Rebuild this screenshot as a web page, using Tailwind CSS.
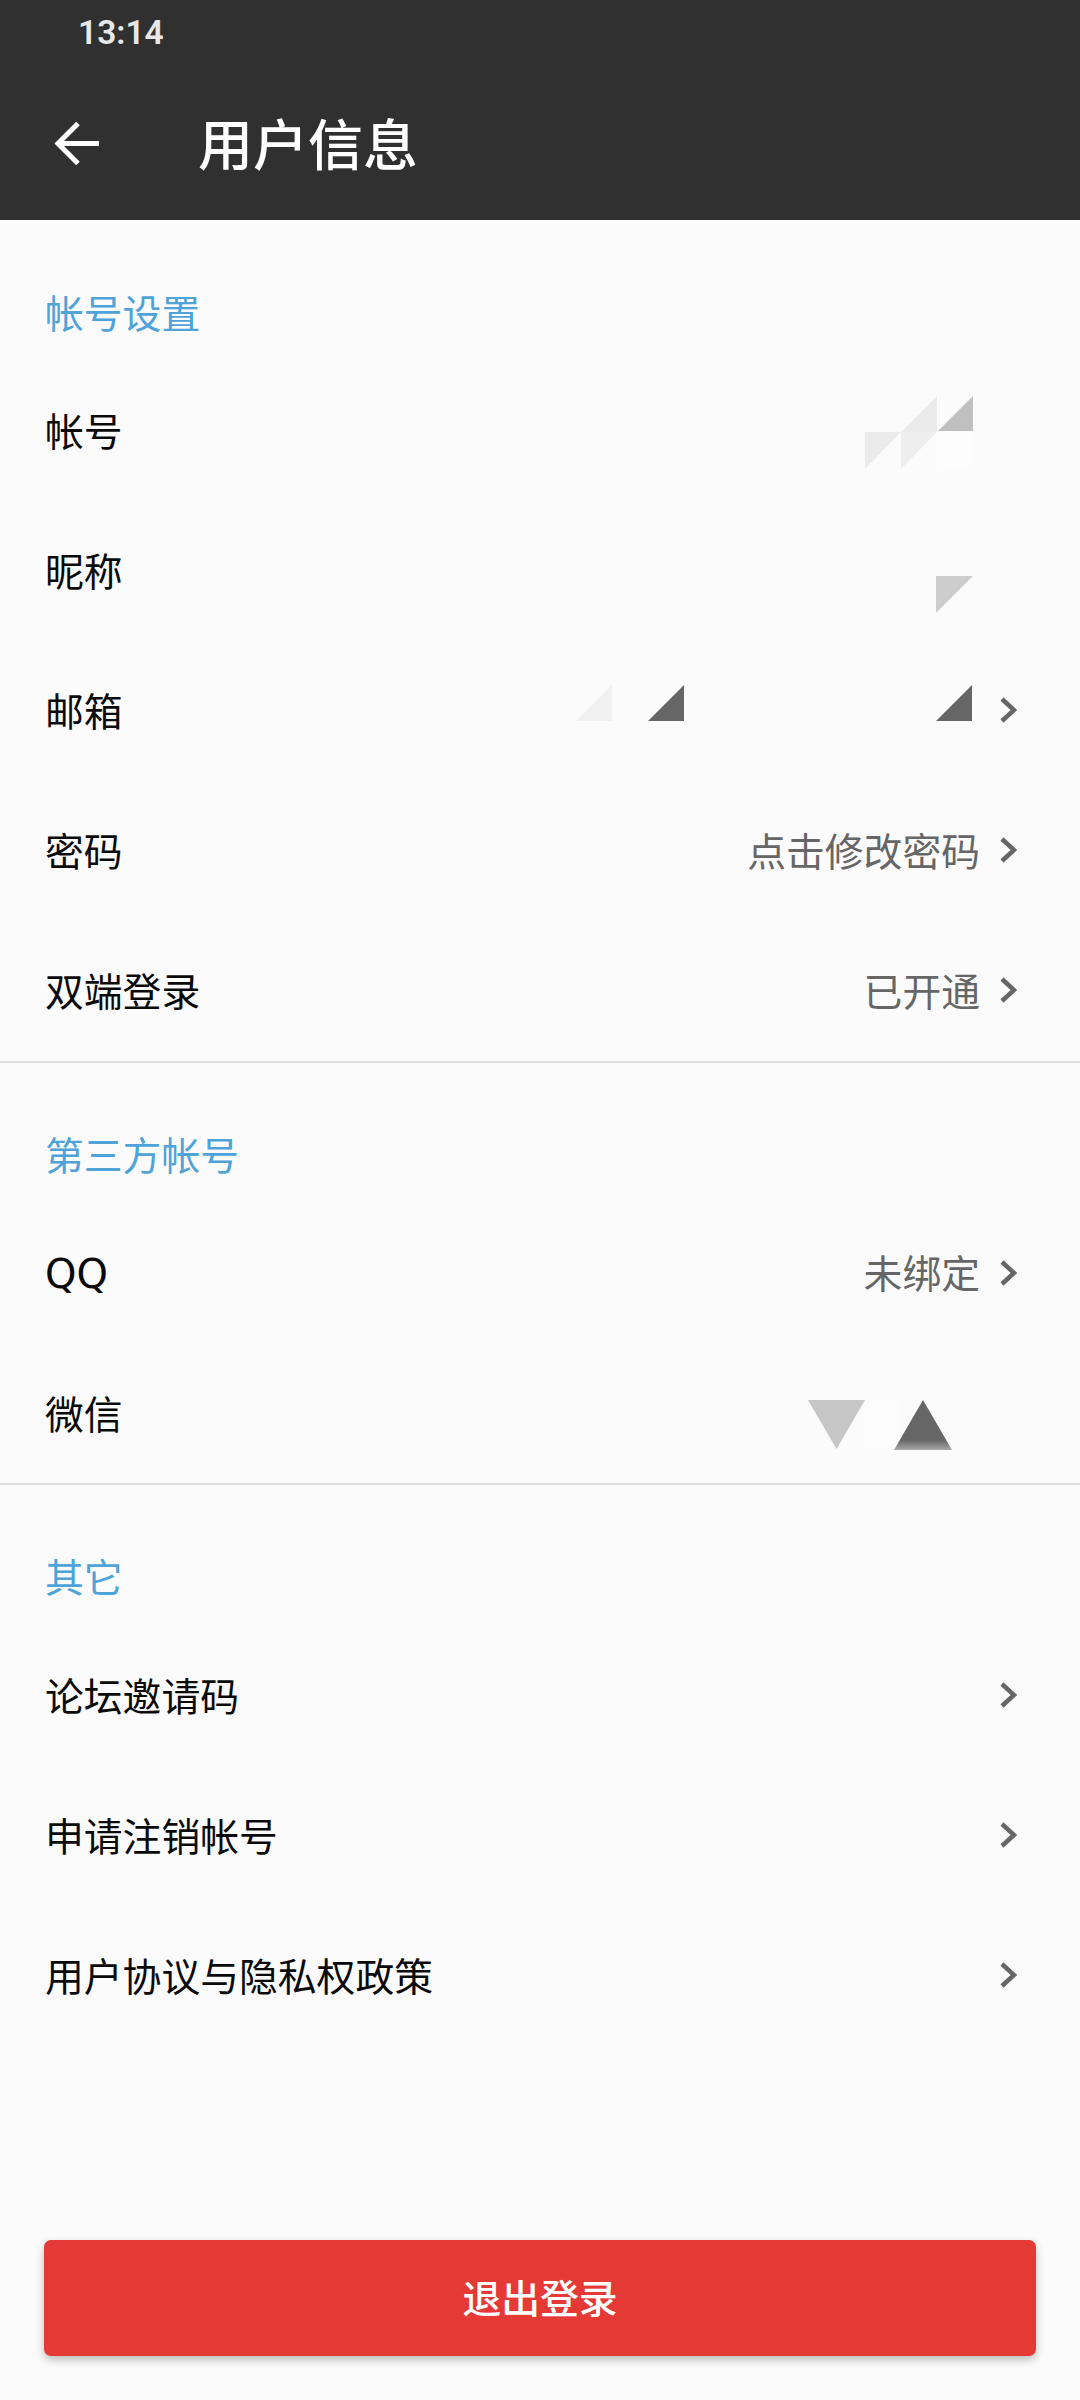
<!DOCTYPE html>
<html lang="zh-CN">
<head>
<meta charset="utf-8">
<script src="https://cdn.jsdelivr.net/npm/@tailwindcss/browser@4"></script>
</head>
<body class="bg-[#fbfbfb] font-['Noto_Sans_CJK_SC',sans-serif] text-[38.8px] leading-[56px] text-[#0a0a0a]">
<div class="relative flex h-[2400px] w-[1080px] flex-col overflow-hidden">

  <header class="h-[220px] shrink-0 bg-[#303030] text-white">
    <div class="flex h-[66px] items-center pl-[78px] font-['Roboto',sans-serif] text-[33.5px] font-semibold leading-none text-[#e8e8e8]">13:14</div>
    <div class="flex h-[154px] items-start pl-[54px]">
      <svg class="mt-[54px]" width="48" height="48" viewBox="0 0 48 48" fill="none" stroke="#fff" stroke-width="5"><path d="M4 23.5H45M24 3.5L4 23.5L24 43.5"/></svg>
      <div class="ml-[96px] mt-[35px] text-[55px] font-medium leading-[80px]">用户信息</div>
    </div>
  </header>

  <section class="border-b-[2px] border-[#dedede]">
    <h2 class="flex h-[141px] items-center pb-[3px] pl-[45px] pt-[43px] text-[38.8px] font-normal text-[#4fa3d8]">帐号设置</h2>
    <div class="flex h-[140px] items-center pl-[45px] pr-[107px]">
      <span class="mb-[5px]">帐号</span>
      <svg class="ml-auto mt-[4px]" width="108" height="75" viewBox="0 0 108 75">
        <rect x="72" y="36" width="36" height="37" fill="#fcfcfc"/>
        <path d="M36 36H0V73Z" fill="#ebebeb"/>
        <path d="M72 0V36H36Z" fill="#ebebeb"/>
        <path d="M72 36H36V73Z" fill="#eeeeee"/>
        <path d="M108 0V35H73Z" fill="#c0c0c0"/>
      </svg>
    </div>
    <div class="flex h-[140px] items-center pl-[45px] pr-[107px]">
      <span class="mb-[5px]">昵称</span>
      <svg class="ml-auto mt-[46px]" width="37" height="37" viewBox="0 0 37 37"><path d="M0 0H37L0 37Z" fill="#cccccc"/></svg>
    </div>
    <div class="flex h-[140px] items-center pl-[45px] pr-[63px]">
      <span class="mb-[5px]">邮箱</span>
      <svg class="ml-auto mb-[16px]" width="396" height="36" viewBox="0 0 396 36">
        <path d="M36 0V36H0Z" fill="#f1f1f1"/>
        <path d="M108 0V36H72Z" fill="#666666"/>
        <path d="M396 0V36H360Z" fill="#666666"/>
      </svg>
      <svg class="mb-[2px] ml-[28px]" width="17" height="26" viewBox="0 0 17 26" fill="none" stroke="#666" stroke-width="4.5"><path d="M2 2L14 13L2 24"/></svg>
    </div>
    <div class="flex h-[140px] items-center pl-[45px] pr-[63px]">
      <span class="mb-[5px]">密码</span>
      <span class="mb-[5px] ml-auto text-[#666]">点击修改密码</span>
      <svg class="mb-[2px] ml-[20px]" width="17" height="26" viewBox="0 0 17 26" fill="none" stroke="#666" stroke-width="4.5"><path d="M2 2L14 13L2 24"/></svg>
    </div>
    <div class="flex h-[140px] items-center pl-[45px] pr-[63px]">
      <span class="mb-[5px]">双端登录</span>
      <span class="mb-[5px] ml-auto text-[#666]">已开通</span>
      <svg class="mb-[2px] ml-[20px]" width="17" height="26" viewBox="0 0 17 26" fill="none" stroke="#666" stroke-width="4.5"><path d="M2 2L14 13L2 24"/></svg>
    </div>
  </section>

  <section class="border-b-[2px] border-[#dedede]">
    <h2 class="flex h-[140px] items-center pb-[3px] pl-[45px] pt-[43px] text-[38.8px] font-normal text-[#4fa3d8]">第三方帐号</h2>
    <div class="flex h-[140px] items-center pl-[45px] pr-[63px]">
      <span class="mt-[1px] font-['DejaVu_Sans',sans-serif] text-[40px] leading-[56px] text-[#0a0a0a]">QQ</span>
      <span class="mb-[5px] ml-auto text-[#666]">未绑定</span>
      <svg class="mb-[1px] ml-[20px]" width="17" height="26" viewBox="0 0 17 26" fill="none" stroke="#666" stroke-width="4.5"><path d="M2 2L14 13L2 24"/></svg>
    </div>
    <div class="flex h-[140px] items-center pl-[45px] pr-[128px]">
      <span class="mb-[3px]">微信</span>
      <svg class="ml-auto mt-[24px]" width="144" height="50" viewBox="0 0 144 50">
        <defs>
          <linearGradient id="fade" x1="0" y1="0" x2="0" y2="1">
            <stop offset="0.8" stop-color="#666666"/>
            <stop offset="1" stop-color="#a8a8a8"/>
          </linearGradient>
        </defs>
        <rect x="57" y="0" width="34" height="50" fill="#fcfcfc"/>
        <path d="M0 0H57L28.5 49Z" fill="#c6c6c6"/>
        <path d="M115 0L144 50H86Z" fill="url(#fade)"/>
      </svg>
    </div>
  </section>

  <section>
    <h2 class="flex h-[140px] items-center pb-[3px] pl-[45px] pt-[43px] text-[38.8px] font-normal text-[#4fa3d8]">其它</h2>
    <div class="flex h-[140px] items-center pl-[45px] pr-[63px]">
      <span class="mb-[3px]">论坛邀请码</span>
      <svg class="ml-auto mb-[1px]" width="17" height="26" viewBox="0 0 17 26" fill="none" stroke="#666" stroke-width="4.5"><path d="M2 2L14 13L2 24"/></svg>
    </div>
    <div class="flex h-[140px] items-center pl-[45px] pr-[63px]">
      <span class="mb-[3px]">申请注销帐号</span>
      <svg class="ml-auto mb-[1px]" width="17" height="26" viewBox="0 0 17 26" fill="none" stroke="#666" stroke-width="4.5"><path d="M2 2L14 13L2 24"/></svg>
    </div>
    <div class="flex h-[140px] items-center pl-[45px] pr-[63px]">
      <span class="mb-[3px]">用户协议与隐私权政策</span>
      <svg class="ml-auto mb-[1px]" width="17" height="26" viewBox="0 0 17 26" fill="none" stroke="#666" stroke-width="4.5"><path d="M2 2L14 13L2 24"/></svg>
    </div>
  </section>

  <div class="mt-auto px-[44px] pb-[44px]">
    <button class="flex h-[116px] w-full items-center justify-center rounded-[7px] bg-[#e53935] pb-[4px] text-[38.8px] font-medium text-white shadow-[0_4px_8px_rgba(0,0,0,0.25)]">退出登录</button>
  </div>
</div>
</body>
</html>
